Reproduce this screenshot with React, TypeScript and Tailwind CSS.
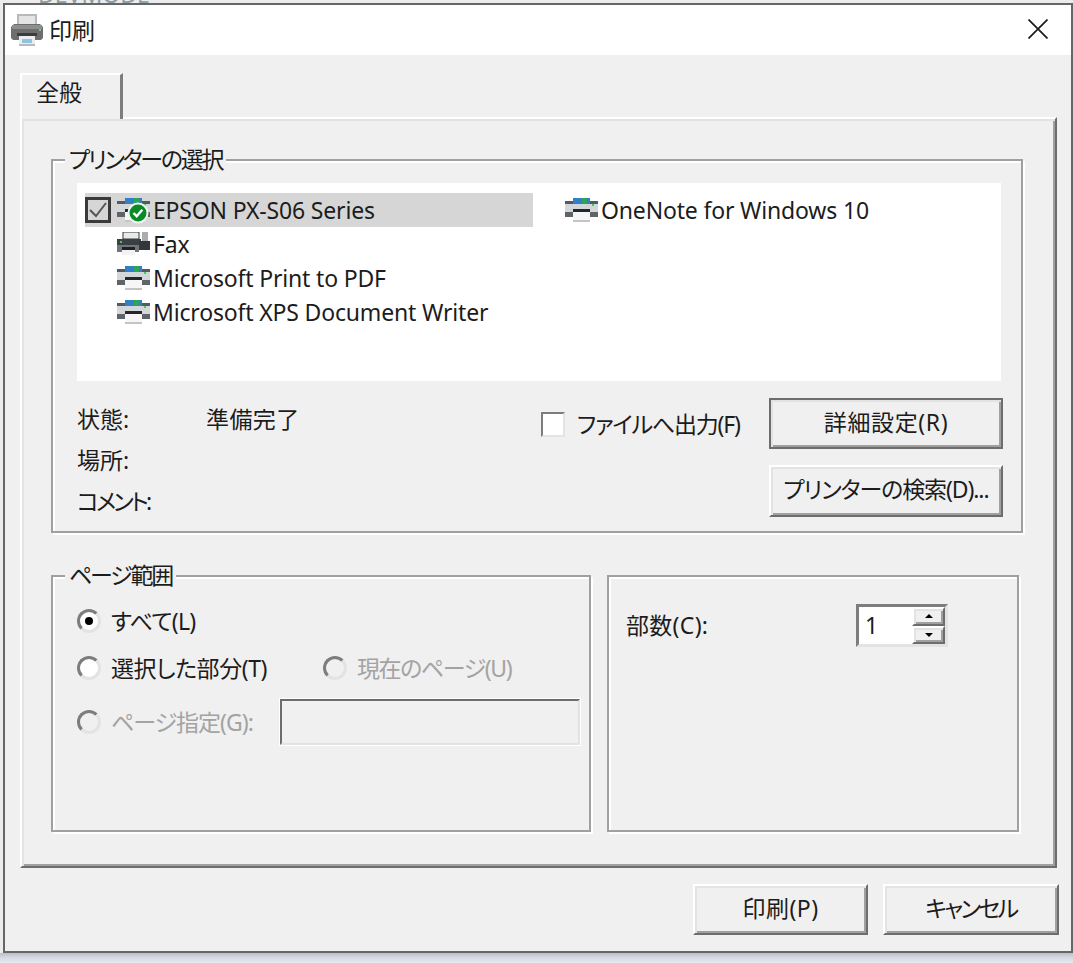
import type { ReactNode } from "react";

const etched = "border-2 border-[#a0a0a0] shadow-[inset_2px_2px_0_#fff,2px_2px_0_#fff]";
const raised = "bg-[#f0f0f0] border-2 border-t-white border-l-white border-r-[#6d6d6d] border-b-[#6d6d6d] shadow-[inset_2px_2px_0_#e3e3e3,inset_-2px_-2px_0_#a0a0a0]";

function TitleIcon() {
  return (
    <svg width="32" height="32" viewBox="0 0 32 32">
      <rect x="6" y="0" width="20" height="12" fill="#b9b9b9" />
      <rect x="8" y="2" width="16" height="10" fill="#e4e4e4" />
      <path d="M3 10h26l3 3v11l-2 2H2l-2-2V13z" fill="#6e6e6e" />
      <rect x="1" y="11" width="30" height="4" fill="#8f8f8f" />
      <rect x="6" y="19" width="20" height="3" fill="#3c3c3c" />
      <rect x="28" y="15" width="2" height="2" fill="#7fc77f" />
      <rect x="8" y="22" width="16" height="9" fill="#e8eef2" />
      <rect x="11" y="25" width="10" height="4" fill="#8fc4e4" />
      <rect x="8" y="30" width="16" height="2" fill="#b9b9b9" />
    </svg>
  );
}

function PrinterIcon({ badge }: { badge?: boolean }) {
  return (
    <svg width="34" height="24" viewBox="0 0 34 24" className="shrink-0 overflow-visible">
      <rect x="0" y="3" width="33" height="3" fill="#555a60" />
      <rect x="8" y="0" width="17" height="6" fill="#2f80c9" />
      <rect x="17" y="0" width="5" height="6" fill="#2fa35a" />
      <rect x="0" y="6" width="33" height="8" fill="#d3d7da" />
      <rect x="0" y="14" width="33" height="5" fill="#5f6468" />
      <rect x="8" y="11" width="17" height="3" fill="#24272a" />
      <rect x="27" y="6" width="2" height="2" fill="#3fd04f" />
      <rect x="8" y="14" width="17" height="8" fill="#f6f6f6" />
      <rect x="8" y="22" width="17" height="2" fill="#c4c4c4" />
      {badge && (
        <>
          <circle cx="21" cy="15" r="10.5" fill="#eef5ee" />
          <circle cx="21" cy="15" r="8.5" fill="#0a8a28" />
          <path d="M16.5 15l3.2 3.2 5.6-6.4" fill="none" stroke="#fff" strokeWidth="2.4" />
        </>
      )}
    </svg>
  );
}

function FaxIcon() {
  return (
    <svg width="34" height="24" viewBox="0 0 34 24" className="shrink-0">
      <rect x="6" y="0" width="16" height="7" fill="#e9eaea" stroke="#34383b" />
      <rect x="0" y="7" width="24" height="6" fill="#3b4044" />
      <rect x="3" y="9" width="2" height="2" fill="#3fd04f" />
      <rect x="25" y="0" width="6" height="10" fill="#a9adb0" />
      <rect x="22" y="9" width="11" height="9" fill="#33373a" />
      <rect x="0" y="13" width="22" height="7" fill="#70767a" />
      <rect x="5" y="15" width="13" height="3" fill="#202326" />
      <rect x="5" y="18" width="13" height="5" fill="#f2f2f2" />
    </svg>
  );
}

function Radio({ checked, disabled }: { checked?: boolean; disabled?: boolean }) {
  return (
    <span className={`w-6 h-6 shrink-0 rounded-full border-[3px] border-t-[#7d7d7d] border-l-[#7d7d7d] border-r-[#e3e3e3] border-b-[#e3e3e3] flex items-center justify-center ${disabled ? "bg-[#f0f0f0]" : "bg-white"}`}>
      {checked && <span className="w-2 h-2 rounded-full bg-black" />}
    </span>
  );
}

function RadioLabel({ children, disabled, className }: { children: ReactNode; disabled?: boolean; className?: string }) {
  return <span className={`ml-[10px] whitespace-nowrap ${disabled ? "text-[#a3a3a3]" : ""} ${className ?? ""}`}>{children}</span>;
}

function Group({ title, titleClass, className, children }: { title?: string; titleClass?: string; className: string; children: ReactNode }) {
  return (
    <div className={`relative ${etched} ${className}`}>
      {title && <span className={`absolute left-[12px] -top-[15px] px-[4px] bg-[#f0f0f0] leading-[26px] ${titleClass ?? ""}`}>{title}</span>}
      {children}
    </div>
  );
}

function PrinterRow({ name, selected, icon }: { name: string; selected?: boolean; icon: ReactNode }) {
  return (
    <div className={`h-[34px] flex items-center tracking-[-0.17px] ${selected ? "bg-[#d6d6d6]" : ""}`}>
      <span className="w-[32px] shrink-0 flex items-center">
        {selected && (
          <span className="w-[26px] h-[26px] border-[3px] border-[#3a3a3a] flex items-center justify-center">
            <svg width="20" height="20" viewBox="0 0 20 20">
              <path d="M2 10l6 6L18 3" fill="none" stroke="#555" strokeWidth="2" />
            </svg>
          </span>
        )}
      </span>
      {icon}
      <span className="ml-[2px] whitespace-nowrap">{name}</span>
    </div>
  );
}

export default function App() {
  return (
    <div className="relative w-[1073px] h-[963px] overflow-hidden bg-[#ececec] pt-[3px] text-[23px] text-[#1c1c1c] font-['Noto_Sans','Noto_Sans_CJK_JP',sans-serif] [font-feature-settings:'palt']">
      {/* window behind the dialog, only its bottom edge shows */}
      <span className="absolute left-[38px] -top-[19px] text-[#8f9ba3] leading-[26px]">DEVMODE</span>

      <div className="relative ml-[3px] w-[1070px] h-[950px] border-2 border-[#666] flex flex-col">
        {/* Title bar */}
        <div className="h-[50px] bg-white flex items-center pl-[6px] pr-[23px] shrink-0">
          <TitleIcon />
          <span className="ml-[6px]">印刷</span>
          <svg width="20" height="20" viewBox="0 0 20 20" className="ml-auto -mt-[2px]">
            <path d="M0.5 0.5l19 19M19.5 0.5l-19 19" stroke="#1a1a1a" strokeWidth="1.7" />
          </svg>
        </div>

        <div className="flex-1 bg-[#f0f0f0] pl-[15px] pt-[18px] flex flex-col">
          {/* Tab */}
          <div className="relative z-10 w-[103px] h-[46px] -mb-[2px] bg-[#f0f0f0] border-t-2 border-l-2 border-r-[3px] border-t-white border-l-white border-r-[#7d7d7d] pl-[14px]">
            全般
          </div>

          {/* Tab panel */}
          <div className={`${raised} w-[1037px] h-[751px] pl-[29px] pt-[40px]`}>
            <Group title="プリンターの選択" titleClass="tracking-[-2.25px]" className="w-[972px] h-[374px] pl-[24px] pt-[22px]">
              <div className="w-[924px] h-[198px] bg-white pl-[8px] pt-[10px] grid grid-cols-[448px_1fr] content-start">
                <div>
                  <PrinterRow name="EPSON PX-S06 Series" selected icon={<PrinterIcon badge />} />
                  <PrinterRow name="Fax" icon={<FaxIcon />} />
                  <PrinterRow name="Microsoft Print to PDF" icon={<PrinterIcon />} />
                  <PrinterRow name="Microsoft XPS Document Writer" icon={<PrinterIcon />} />
                </div>
                <PrinterRow name="OneNote for Windows 10" icon={<PrinterIcon />} />
              </div>

              <div className="flex mt-[17px]">
                <div className="w-[464px] pt-[1px] grid grid-cols-[129px_1fr] auto-rows-[41px] items-center">
                  <span>状態:</span>
                  <span className="tracking-[0.4px]">準備完了</span>
                  <span>場所:</span>
                  <span />
                  <span className="tracking-[-2.8px]">コメント:</span>
                  <span />
                </div>
                <div className="w-[228px] pt-[14px] flex items-start">
                  <span className="w-[24px] h-[25px] shrink-0 bg-white border-2 border-t-[#7d7d7d] border-l-[#7d7d7d] border-r-[#e3e3e3] border-b-[#e3e3e3]" />
                  <span className="ml-[12px] whitespace-nowrap leading-[24px] tracking-[-1.2px]">ファイルへ出力(F)</span>
                </div>
                <div className="flex flex-col gap-[16px]">
                  <button className={`w-[234px] h-[51px] pb-[3px] tracking-[0.6px] ${raised} outline-2 outline-[#6d6d6d] -outline-offset-2`}>詳細設定(R)</button>
                  <button className={`w-[234px] h-[52px] pb-[3px] tracking-[-1.1px] ${raised}`}>プリンターの検索(D)...</button>
                </div>
              </div>
            </Group>

            <div className="flex gap-[16px] mt-[42px]">
              <Group title="ページ範囲" titleClass="tracking-[-2.2px]" className="w-[540px] h-[257px] pl-[24px] pt-[30px]">
                <div className="flex items-center h-[28px]">
                  <Radio checked />
                  <RadioLabel className="tracking-[-0.7px]">すべて(L)</RadioLabel>
                </div>
                <div className="flex items-center h-[28px] mt-[19px]">
                  <Radio />
                  <RadioLabel className="tracking-[-0.45px]">選択した部分(T)</RadioLabel>
                  <span className="ml-[56px] flex items-center">
                    <Radio disabled />
                    <RadioLabel disabled className="tracking-[-1.4px]">現在のページ(U)</RadioLabel>
                  </span>
                </div>
                <div className="flex items-center h-[46px] mt-[17px]">
                  <Radio disabled />
                  <RadioLabel disabled className="tracking-[-1px]">ページ指定(G):</RadioLabel>
                  <span className="ml-auto mr-[9px] w-[300px] h-[46px] border-2 border-t-[#6d6d6d] border-l-[#6d6d6d] border-r-[#e3e3e3] border-b-[#e3e3e3] outline outline-1 outline-white" />
                </div>
              </Group>

              <Group className="w-[412px] h-[257px] pl-[17px] pt-[27px]">
                <div className="flex items-start">
                  <span className="w-[230px] pt-[4px] tracking-[0.3px]">部数(C):</span>
                  <div className="w-[92px] h-[43px] bg-white border-[3px] border-[#7d7d7d] border-b-[#e3e3e3] border-r-[#e3e3e3] flex">
                    <span className="flex-1 pl-[6px] leading-[36px]">1</span>
                    <div className="w-[33px] flex flex-col">
                      <span className={`${raised} flex-1 flex items-center justify-center`}>
                        <span className="border-x-[4px] border-x-transparent border-b-[4px] border-b-black" />
                      </span>
                      <span className={`${raised} flex-1 flex items-center justify-center`}>
                        <span className="border-x-[4px] border-x-transparent border-t-[4px] border-t-black" />
                      </span>
                    </div>
                  </div>
                </div>
              </Group>
            </div>
          </div>

          {/* Footer */}
          <div className="flex justify-end gap-[15px] mt-[16px] pr-[12px]">
            <button className={`w-[175px] h-[51px] pb-[2px] tracking-[0.5px] ${raised}`}>印刷(P)</button>
            <button className={`w-[176px] h-[51px] pb-[2px] tracking-[-2.6px] ${raised}`}>キャンセル</button>
          </div>
        </div>
      </div>

      <div className="h-[10px] bg-gradient-to-b from-[#bcbfc4] via-[#d6dbe4] to-[#e6e9f0]" />
    </div>
  );
}
